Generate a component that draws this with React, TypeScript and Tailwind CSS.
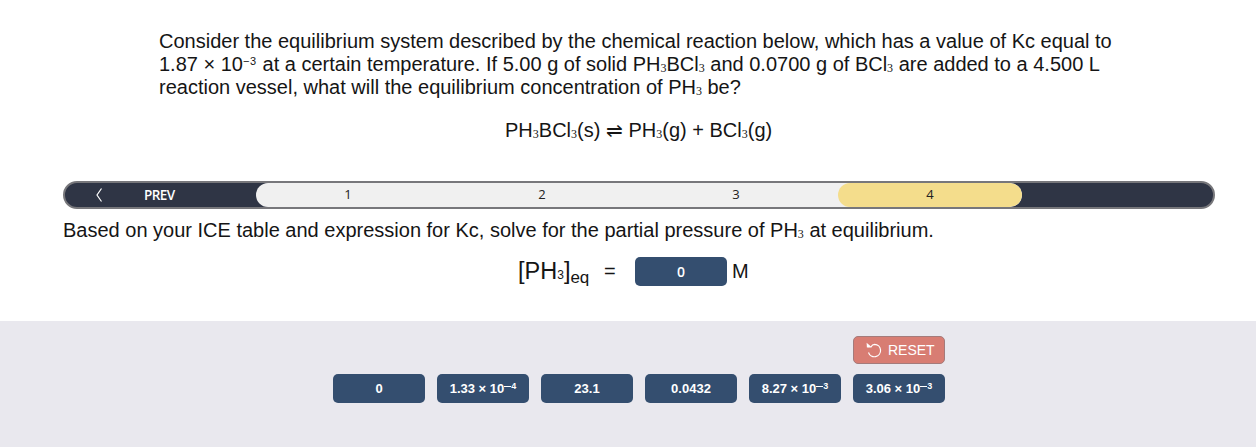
const answers = [
  { base: "0" },
  { base: "1.33 × 10", exp: "4" },
  { base: "23.1" },
  { base: "0.0432" },
  { base: "8.27 × 10", exp: "3" },
  { base: "3.06 × 10", exp: "3" },
];

function Sub() {
  return (
    <span className="relative top-px inline-block w-[6px] text-center font-['Liberation_Serif',serif] text-[12px] leading-none">
      3
    </span>
  );
}

function Exponent({ value }: { value: string }) {
  return (
    <span className="relative -top-[4px] text-[9px] leading-none">
      <span className="inline-block w-[7px] h-px bg-current align-[2px]" />
      {value}
    </span>
  );
}

export default function App() {
  return (
    <div className="flex h-[447px] w-[1256px] flex-col overflow-hidden bg-white font-['Liberation_Sans',Arial,sans-serif] text-[#151515]">
      {/* Question */}
      <div className="ml-[159px] mt-[30px] flex flex-col whitespace-nowrap text-[20px]">
        <p className="h-[23px] leading-[23px]">
          Consider the equilibrium system described by the chemical reaction below, which has a value of Kc equal to
        </p>
        <p className="h-[23px] leading-[23px]">
          1.87 × 10
          <span className="relative -top-[6px] inline-block w-[14px] text-[11px] leading-none tracking-[0.5px]">−3</span> at a certain temperature. If 5.00 g of
          solid PH<Sub />BCl<Sub /> and 0.0700 g of BCl<Sub /> are added to a 4.500 L
        </p>
        <p className="h-[23px] leading-[23px]">
          reaction vessel, what will the equilibrium concentration of PH<Sub /> be?
        </p>
      </div>
      <p className="ml-[505px] mt-5 h-[23px] whitespace-nowrap text-[20px] leading-[23px]">
        PH<Sub />BCl<Sub />(s) ⇌ PH<Sub />(g) + BCl<Sub />(g)
      </p>

      {/* Step navigation */}
      <nav className="ml-[63px] mt-[39px] flex h-7 w-[1152px] overflow-hidden rounded-full border-2 border-[#77777b] bg-[#2f3545] font-['Open_Sans',sans-serif] text-[13px] text-[#222]">
        <button className="flex w-[191px] items-center text-white">
          <svg className="ml-[30px] h-4 w-2" viewBox="0 0 8 16" fill="none" stroke="currentColor" strokeWidth="1.2">
            <path d="M6.5 1.5 2 8l4.500 6.500" />
          </svg>
          <span className="ml-[41px] text-[13.500px] font-semibold tracking-[-0.6px]">PREV</span>
        </button>
        <div className="flex w-[766px] overflow-hidden rounded-full bg-[#f0f0f0]">
          <button className="w-[184px]">1</button>
          <button className="ml-[10px] w-[184px]">2</button>
          <button className="ml-[10px] w-[184px]">3</button>
          <button className="ml-[10px] w-[184px] rounded-full bg-[#f4dd8c]">4</button>
        </div>
      </nav>

      <p className="ml-[63px] mt-[10px] h-[23px] whitespace-nowrap text-[20px] leading-[23px]">
        Based on your ICE table and expression for Kc, solve for the partial pressure of PH<Sub /> at equilibrium.
      </p>

      {/* Answer */}
      <div className="ml-[518px] mt-[15px] flex h-[29px] items-center whitespace-nowrap">
        <div className="w-[86px] pt-[4px] text-[23.500px] leading-[29px]">
          [PH<span className="text-[12px]">3</span>]<span className="relative top-[4px] text-[17px] leading-none">eq</span>
        </div>
        <span className="w-[31px] pb-px text-[20px]">=</span>
        <div className="flex h-[29px] w-[92px] items-center justify-center rounded-[5px] bg-[#344e6f] font-['Open_Sans',sans-serif] text-[14px] font-semibold text-white">
          0
        </div>
        <span className="ml-[5px] pb-px text-[20px]">M</span>
      </div>

      {/* Answer bank */}
      <div className="mt-[35px] flex flex-1 flex-col bg-[#e9e8ee] pl-[333px] pt-[15px] text-white">
        <button className="ml-[520px] flex h-7 w-[92px] items-center rounded-[5px] border border-[#a47b7b] bg-[#d87d73] pl-3 text-[14px]">
          <svg className="mr-[6px] h-4 w-4 shrink-0" viewBox="0 0 16 16" fill="none" stroke="currentColor" strokeWidth="1.2">
            <path d="M2 4.500H5.500C6.500 2.500 8 2 9 2a6.200 6.200 0 1 1-6.100 8.200" transform="translate(-.4 .3)" />
            <path d="M.600.800.900 5.600 5 4.600z" fill="currentColor" stroke="none" />
          </svg>
          RESET
        </button>
        <div className="mt-[10px] flex gap-3">
          {answers.map((a, i) => (
            <button
              key={i}
              className="flex h-[29px] w-[92px] items-center justify-center rounded-[5px] bg-[#344e6f] text-[13px] font-bold"
            >
              <span className="whitespace-nowrap">
                {a.base}
                {a.exp && <Exponent value={a.exp} />}
              </span>
            </button>
          ))}
        </div>
      </div>
    </div>
  );
}
